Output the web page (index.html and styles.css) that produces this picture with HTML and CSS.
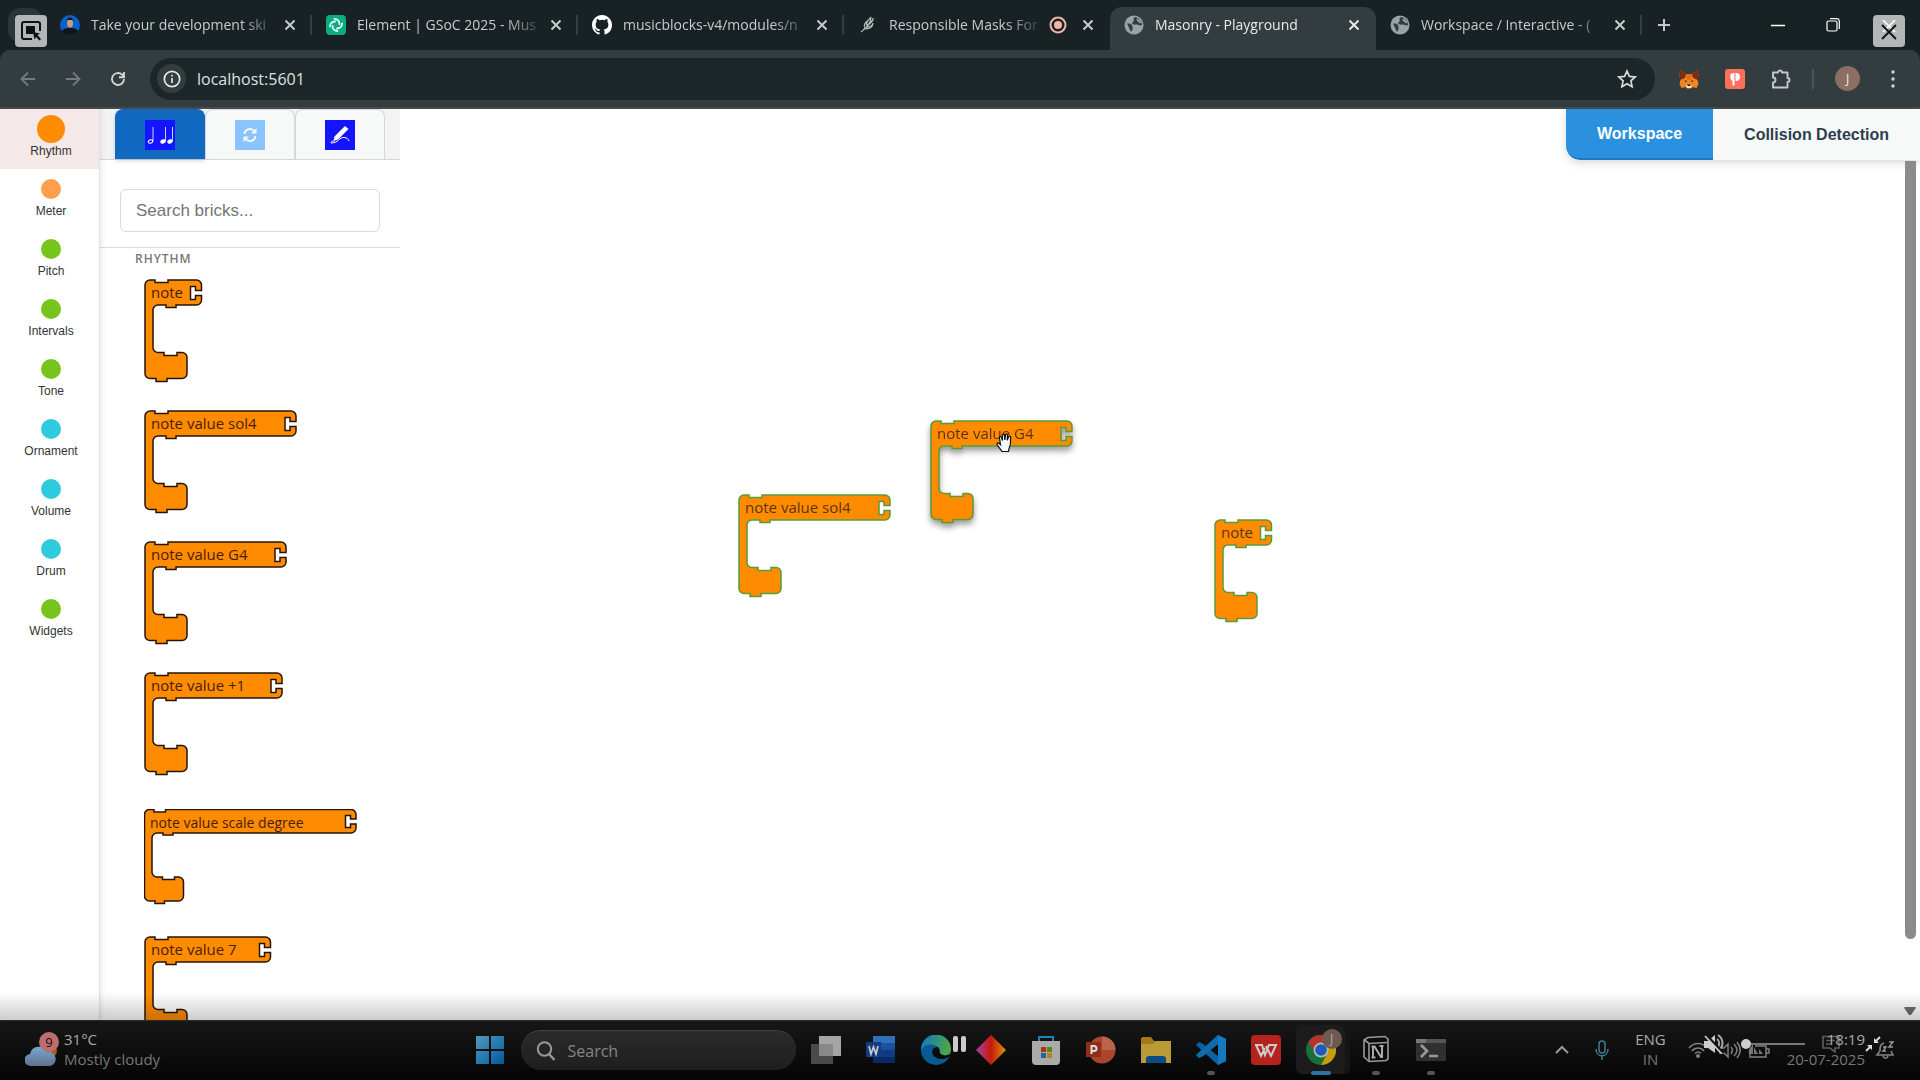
FILE: index.html
```html
<!DOCTYPE html>
<html lang="en">
<head>
<meta charset="utf-8">
<title>Masonry - Playground</title>
<link rel="stylesheet" href="styles.css">
</head>
<body>
<svg class="defs" aria-hidden="true">
  <symbol id="x" viewBox="0 0 12 12"><path d="M1.500 1.500l9 9M10.500 1.500l-9 9" stroke="currentColor" stroke-width="2" fill="none"/></symbol>
  <symbol id="globe" viewBox="0 0 20 20"><circle cx="10" cy="10" r="9.500" fill="#9aa3a6"/><path d="M3 8.500c3 0 4 0 5 2s1 4-1 6.500z" fill="#333d40"/><path d="M11 2c-3 2 0 3-2 5s0 3 3 2.500 4 2 6 .5c0-4-3-7-7-8z" fill="#333d40"/><path d="M13 3.500c-1 2 0 2 1 3s1 2 3.500 1.500c-1-2-2.500-4-4.500-4.500z" fill="#9aa3a6"/></symbol>
</svg>
<div class="screen">
  <header class="browser">
    <div class="tabstrip">
      <div class="tab-search"></div>
      <nav class="tabs" aria-label="Browser tabs">
        <div class="tab"><svg class="fav" viewBox="0 0 20 20"><circle cx="10" cy="10" r="10" fill="#0a62c8"/><path d="M2 16c2-3 5-3 8-3s6 0 8 3a10 10 0 0 1-16 0" fill="#101418"/><ellipse cx="10" cy="8" rx="3" ry="4.500" fill="#c99a82"/><path d="M6.500 7c0-6 7-6 7 0l-1-2h-5z" fill="#1b1512"/></svg><a class="tab-title" href="#">Take your development ski</a><button class="tab-x" aria-label="Close"><svg viewBox="0 0 12 12"><use href="#x"/></svg></button></div>
        <div class="tab"><svg class="fav" viewBox="0 0 20 20"><rect width="20" height="20" rx="4" fill="#0dab83"/><g fill="none" stroke="#e8fff8" stroke-width="1.800" stroke-linecap="round"><path d="M8.500 4a5 5 0 0 1 5 5M16 8.500a5 5 0 0 1-5 5M11.500 16a5 5 0 0 1-5-5M4 11.500a5 5 0 0 1 5-5"/></g></svg><a class="tab-title" href="#">Element | GSoC 2025 - Mus</a><button class="tab-x" aria-label="Close"><svg viewBox="0 0 12 12"><use href="#x"/></svg></button></div>
        <div class="tab"><svg class="fav" viewBox="0 0 16 16"><path fill="#fff" d="M8 0C3.580 0 0 3.580 0 8c0 3.540 2.290 6.530 5.470 7.590.4.070.55-.17.55-.38v-1.490C4 14.090 3.480 13.200 3.320 12.750c-.09-.23-.48-.94-.82-1.130-.28-.15-.68-.52-.01-.53.63-.01 1.080.58 1.230.82.72 1.210 1.870.87 2.330.66.070-.52.28-.87.51-1.070-1.780-.2-3.640-.89-3.640-3.950 0-.87.31-1.590.82-2.150-.08-.2-.36-1.020.08-2.120 0 0 .67-.21 2.200.82a7.600 7.600 0 0 1 4 0c1.530-1.040 2.200-.82 2.200-.82.44 1.100.16 1.920.08 2.120.51.56.82 1.270.82 2.150 0 3.070-1.870 3.750-3.650 3.950.29.25.54.73.54 1.480v2.200c0 .21.15.46.55.38A8 8 0 0 0 16 8c0-4.420-3.580-8-8-8z"/></svg><a class="tab-title" href="#">musicblocks-v4/modules/n</a><button class="tab-x" aria-label="Close"><svg viewBox="0 0 12 12"><use href="#x"/></svg></button></div>
        <div class="tab"><svg class="fav" viewBox="0 0 20 20"><path d="M3 17C8 13 13 9 13 2c-1 2-6 4-4 9m0 0c2-4 7-5 6-8 1 4-3 5-6 8zm-3 3c2-3 8-1 9-6 0 5-4 6-9 6zm1-1c-2-3 0-5 2-7" fill="none" stroke="#b5bbbd" stroke-width="1.200"/></svg><a class="tab-title" href="#">Responsible Masks For</a><svg class="rec" viewBox="0 0 18 18"><circle cx="9" cy="9" r="7.500" fill="none" stroke="#f3b3a6" stroke-width="2"/><circle cx="9" cy="9" r="4" fill="#f3b3a6"/></svg><button class="tab-x" aria-label="Close"><svg viewBox="0 0 12 12"><use href="#x"/></svg></button></div>
        <div class="tab active"><svg class="fav" viewBox="0 0 20 20"><use href="#globe"/></svg><a class="tab-title" href="#">Masonry - Playground</a><button class="tab-x" aria-label="Close"><svg viewBox="0 0 12 12"><use href="#x"/></svg></button></div>
        <div class="tab"><svg class="fav" viewBox="0 0 20 20"><use href="#globe"/></svg><a class="tab-title" href="#">Workspace / Interactive - (</a><button class="tab-x" aria-label="Close"><svg viewBox="0 0 12 12"><use href="#x"/></svg></button></div>
      </nav>
      <button class="new-tab" aria-label="New tab"><svg viewBox="0 0 14 14"><path d="M7 1v12M1 7h12" stroke="currentColor" stroke-width="2"/></svg></button>
      <div class="win-controls">
        <button aria-label="Minimize"><svg viewBox="0 0 14 14"><path d="M0 7.500h14" stroke="#fff" stroke-width="1.500"/></svg></button>
        <button aria-label="Restore"><svg viewBox="0 0 14 14"><path d="M1 4.500a1.500 1.500 0 0 1 1.500-1.500h7A1.500 1.500 0 0 1 11 4.500v7a1.500 1.500 0 0 1-1.500 1.500h-7A1.500 1.500 0 0 1 1 11.500zM4 .7h7A2.500 2.500 0 0 1 13.300 3v8" fill="none" stroke="#fff" stroke-width="1.200"/></svg></button>
      </div>
    </div>
    <div class="toolbar">
      <button class="nav-btn dim" aria-label="Back"><svg viewBox="0 0 16 16"><path d="M15 8H2M8 1.500L1.500 8 8 14.500" fill="none" stroke="currentColor" stroke-width="1.800"/></svg></button>
      <button class="nav-btn dim" aria-label="Forward"><svg viewBox="0 0 16 16"><path d="M1 8h13M8 1.500L14.500 8 8 14.500" fill="none" stroke="currentColor" stroke-width="1.800"/></svg></button>
      <button class="nav-btn" aria-label="Reload"><svg viewBox="0 0 16 16"><path d="M14 8a6 6 0 1 1-2-4.500L14 6M14 1v5.200H9" fill="none" stroke="currentColor" stroke-width="1.900"/></svg></button>
      <div class="omnibox">
        <button class="info" aria-label="Site information"><svg viewBox="0 0 18 18"><circle cx="9" cy="9" r="7.700" fill="none" stroke="#e3e6e7" stroke-width="1.700"/><path d="M9 8v5M9 4.700v1.800" stroke="#e3e6e7" stroke-width="1.700"/></svg></button>
        <input class="url" aria-label="Address" value="localhost:5601">
        <button class="star" aria-label="Bookmark"><svg viewBox="0 0 20 20"><path d="M10 2l2.400 5.400 5.800.6-4.300 3.900 1.200 5.800L10 14.700l-5.100 3 1.200-5.800L1.800 8l5.800-.6z" fill="none" stroke="#d5dadb" stroke-width="1.700"/></svg></button>
      </div>
      <div class="exts">
        <button aria-label="MetaMask"><svg viewBox="0 0 20 20"><path d="M1 1l6 4h6l6-4 .5 6-1 4 1 4-2 4-4-1-1.500 1.500h-4L6.500 18l-4 1-2-4 1-4-1-4z" fill="#f5841f"/><path d="M1 1l6 4-1 4-5 2L.5 7zM19 1l-6 4 1 4 5 2 .5-4z" fill="#7a2d12"/><path d="M7 5h6l-1 6H8z" fill="#e86b1c"/><path d="M5.500 11l2.500 1-1 1.500zM14.500 11l-2.500 1 1 1.500z" fill="#233447"/><path d="M7 16h6l-1 3H8z" fill="#f3e6dc"/><path d="M8.500 15.500h3v1.500h-3z" fill="#161616"/></svg></button>
        <button aria-label="Reader extension"><svg viewBox="0 0 20 20"><rect width="20" height="20" rx="3" fill="#ff6f5b"/><path d="M5.500 5c2-1 3-1 4-1v12.500H7.500V12c-2-1-2.500-3-2-7z M10.500 4c3-.2 4.500 1.200 4.500 4s-1.800 4.300-4.500 4z" fill="#fff"/></svg></button>
        <button aria-label="Extensions"><svg viewBox="0 0 20 20"><path d="M2 3.500h5a2 2 0 0 1 4 0H16.500V9a2 2 0 0 1 0 4V18.500H2v-5a2.300 2.300 0 0 0 0-5z" fill="none" stroke="#c3c9cb" stroke-width="1.900" stroke-linejoin="round"/></svg></button>
      </div>
      <span class="bar-sep"></span>
      <button class="avatar">J</button>
      <button class="kebab" aria-label="Menu"><svg viewBox="0 0 4 20"><circle cx="2" cy="3" r="1.700"/><circle cx="2" cy="10" r="1.700"/><circle cx="2" cy="17" r="1.700"/></svg></button>
    </div>
  </header>

  <main class="app">
    <nav class="categories" aria-label="Brick categories">
      <a class="cat on" href="#"><i class="dot orange"></i>Rhythm</a>
      <a class="cat" href="#"><i class="dot peach"></i>Meter</a>
      <a class="cat" href="#"><i class="dot green"></i>Pitch</a>
      <a class="cat" href="#"><i class="dot green"></i>Intervals</a>
      <a class="cat" href="#"><i class="dot green"></i>Tone</a>
      <a class="cat" href="#"><i class="dot cyan"></i>Ornament</a>
      <a class="cat" href="#"><i class="dot cyan"></i>Volume</a>
      <a class="cat" href="#"><i class="dot cyan"></i>Drum</a>
      <a class="cat" href="#"><i class="dot green"></i>Widgets</a>
    </nav>
    <aside class="palette">
      <div class="palette-tabs">
        <button class="ptab on" aria-label="Music"><svg viewBox="0 0 30 30"><rect width="30" height="30" fill="#1414ff"/><g fill="#fff"><ellipse cx="18" cy="21.500" rx="2.800" ry="2" transform="rotate(-20 18 21.500)"/><ellipse cx="25" cy="21.500" rx="2.800" ry="2" transform="rotate(-20 25 21.500)"/></g><g fill="none" stroke="#fff"><ellipse cx="5.500" cy="21.500" rx="2.300" ry="1.600" transform="rotate(-20 5.500 21.500)"/><path d="M8 21V7M20.500 21V7M27.500 21V7" stroke-width=".8"/></g></svg></button>
        <button class="ptab" aria-label="Flow"><svg viewBox="0 0 30 30"><rect width="30" height="30" fill="#8ac4ff"/><g fill="none" stroke="#f4f9ff" stroke-width="2"><path d="M9.500 14a5.500 5.500 0 0 1 10-2.500M20.500 16a5.500 5.500 0 0 1-10 2.500"/></g><path d="M21.500 8v5.500H16zM8.500 22v-5.500H14z" fill="#f4f9ff"/></svg></button>
        <button class="ptab" aria-label="Graphics"><svg viewBox="0 0 30 30"><rect width="30" height="30" fill="#1414ff"/><path d="M20 6l3.500 3L13 19.500 8.500 21l1-4.500z" fill="#fff"/><path d="M5.500 22.500c2-2 2-1 4-1.500M6 23c8 0 8-6 13-5.500 3 0 4 1.500 5 3.500" fill="none" stroke="#fff"/></svg></button>
      </div>
      <div class="search-row"><input class="brick-search" type="search" aria-label="Search bricks" placeholder="Search bricks..."></div>
      <section class="brick-list">
        <h2>RHYTHM</h2>
        <div class="slot"><svg class="brick" width="60" height="104"><path d="M1 6a5 5 0 0 1 5-5H11V3.500H24V1H52.500a5 5 0 0 1 5 5V11.500h-6V7.500h-5V20.500h5V16.500h6V21a5 5 0 0 1-5 5H32V28.500H22V26H14a5 5 0 0 0-5 5V68.500a5 5 0 0 0 5 5H20V76.500H33V73.500H38a5 5 0 0 1 5 5V94.500a5 5 0 0 1-5 5H23V102.500H12V99.500H6a5 5 0 0 1-5-5Z"/><text x="7" y="19">note</text></svg></div>
        <div class="slot"><svg class="brick" width="154" height="104"><path d="M1 6a5 5 0 0 1 5-5H11V3.500H24V1H147a5 5 0 0 1 5 5V11.500h-6V7.500h-5V20.500h5V16.500h6V21a5 5 0 0 1-5 5H32V28.500H22V26H14a5 5 0 0 0-5 5V68.500a5 5 0 0 0 5 5H20V76.500H33V73.500H38a5 5 0 0 1 5 5V94.500a5 5 0 0 1-5 5H23V102.500H12V99.500H6a5 5 0 0 1-5-5Z"/><text x="7" y="19">note value sol4</text></svg></div>
        <div class="slot"><svg class="brick" width="144" height="104"><path d="M1 6a5 5 0 0 1 5-5H11V3.500H24V1H137a5 5 0 0 1 5 5V11.500h-6V7.500h-5V20.500h5V16.500h6V21a5 5 0 0 1-5 5H32V28.500H22V26H14a5 5 0 0 0-5 5V68.500a5 5 0 0 0 5 5H20V76.500H33V73.500H38a5 5 0 0 1 5 5V94.500a5 5 0 0 1-5 5H23V102.500H12V99.500H6a5 5 0 0 1-5-5Z"/><text x="7" y="19">note value G4</text></svg></div>
        <div class="slot tall"><svg class="brick" width="140" height="104"><path d="M1 6a5 5 0 0 1 5-5H11V3.500H24V1H133a5 5 0 0 1 5 5V11.500h-6V7.500h-5V20.500h5V16.500h6V21a5 5 0 0 1-5 5H32V28.500H22V26H14a5 5 0 0 0-5 5V68.500a5 5 0 0 0 5 5H20V76.500H33V73.500H38a5 5 0 0 1 5 5V94.500a5 5 0 0 1-5 5H23V102.500H12V99.500H6a5 5 0 0 1-5-5Z"/><text x="7" y="19">note value +1</text></svg></div>
        <div class="slot short"><svg class="brick" width="214" height="96"><path d="M.5 5.500a5 5 0 0 1 5-5H10V3H21.500V.5H207a5 5 0 0 1 5 5V10h-5.500V6.500h-5V18.500h5V15h5.500V19a5 5 0 0 1-5 5H29V26H19V24H13a5 5 0 0 0-5 5V63a5 5 0 0 0 5 5H18.500V70.500H30.500V68H34.500a5 5 0 0 1 5 5V87a5 5 0 0 1-5 5H20.500V94.500H11V92H5.500a5 5 0 0 1-5-5Z"/><text class="small" x="6" y="19">note value scale degree</text></svg></div>
        <div class="slot"><svg class="brick" width="129" height="104"><path d="M1 6a5 5 0 0 1 5-5H11V3.500H24V1H121.500a5 5 0 0 1 5 5V11.500h-6V7.500h-5V20.500h5V16.500h6V21a5 5 0 0 1-5 5H32V28.500H22V26H14a5 5 0 0 0-5 5V68.500a5 5 0 0 0 5 5H20V76.500H33V73.500H38a5 5 0 0 1 5 5V94.500a5 5 0 0 1-5 5H23V102.500H12V99.500H6a5 5 0 0 1-5-5Z"/><text x="7" y="19">note value 7</text></svg></div>
      </section>
    </aside>
    <section class="workspace">
      <svg class="brick placed p-sol" width="154" height="104"><path d="M1 6a5 5 0 0 1 5-5H11V3.500H24V1H147a5 5 0 0 1 5 5V11.500h-6V7.500h-5V20.500h5V16.500h6V21a5 5 0 0 1-5 5H32V28.500H22V26H14a5 5 0 0 0-5 5V68.500a5 5 0 0 0 5 5H20V76.500H33V73.500H38a5 5 0 0 1 5 5V94.500a5 5 0 0 1-5 5H23V102.500H12V99.500H6a5 5 0 0 1-5-5Z"/><text x="7" y="19">note value sol4</text></svg>
      <svg class="brick placed dragging p-g4" width="144" height="104"><path d="M1 6a5 5 0 0 1 5-5H11V3.500H24V1H137a5 5 0 0 1 5 5V11.500h-6V7.500h-5V20.500h5V16.500h6V21a5 5 0 0 1-5 5H32V28.500H22V26H14a5 5 0 0 0-5 5V68.500a5 5 0 0 0 5 5H20V76.500H33V73.500H38a5 5 0 0 1 5 5V94.500a5 5 0 0 1-5 5H23V102.500H12V99.500H6a5 5 0 0 1-5-5Z"/><text x="7" y="19">note value G4</text></svg>
      <svg class="brick placed p-note" width="60" height="104"><path d="M1 6a5 5 0 0 1 5-5H11V3.500H24V1H52.500a5 5 0 0 1 5 5V11.500h-6V7.500h-5V20.500h5V16.500h6V21a5 5 0 0 1-5 5H32V28.500H22V26H14a5 5 0 0 0-5 5V68.500a5 5 0 0 0 5 5H20V76.500H33V73.500H38a5 5 0 0 1 5 5V94.500a5 5 0 0 1-5 5H23V102.500H12V99.500H6a5 5 0 0 1-5-5Z"/><text x="7" y="19">note</text></svg>
      <svg class="hand" viewBox="0 0 18 20"><path d="M6 18.500C4 15 1 12.500 1 11s1.500-1.500 3.500.7L3.500 5c-.3-1.800 1.500-2 2-.5l1 3-.3-5c0-1.800 2-1.800 2.200 0l.4 4.500.7-5c.3-1.500 2-1.300 2 .3l-.3 5 1.500-3.500c.6-1.300 2.200-.8 2 .7-.8 5 1 6-1.700 11l-.5 3z" fill="#f3fbff" stroke="#111" stroke-width="1.200"/></svg>
      <div class="page-tabs"><button class="on">Workspace</button><button>Collision Detection</button></div>
      <div class="scrollbar"><i class="thumb"></i><svg viewBox="0 0 14 10"><path d="M2 1h10q1.500 0 .5 1.500L8 9H6L1.500 2.500Q.5 1 2 1z" fill="#6e6e6e"/></svg></div>
    </section>
  </main>

  <footer class="taskbar">
    <div class="weather">
      <svg class="cloud" viewBox="0 0 34 36"><defs><linearGradient id="cg" x2="0" y2="1"><stop stop-color="#7aa6d4"/><stop offset="1" stop-color="#5f7388"/></linearGradient></defs><circle cx="26" cy="19" r="6" fill="#a45d1a"/><path d="M6 34a6 6 0 0 1-1-12 9 9 0 0 1 17-2 7 7 0 0 1 3 14z" fill="url(#cg)"/><circle cx="24" cy="10" r="10" fill="#bd6d6e"/><text x="24" y="15" text-anchor="middle">9</text></svg>
      <div class="lines"><span>31°C</span><span class="faint">Mostly cloudy</span></div>
    </div>
    <div class="dock">
      <button class="ico start" aria-label="Start"><svg viewBox="0 0 30 30"><defs><linearGradient id="win" x2="1" y2="1"><stop stop-color="#4f9cc0"/><stop offset="1" stop-color="#03589c"/></linearGradient></defs><path d="M1 1h13v13H1zM16 1h13v13H16zM1 16h13v13H1zM16 16h13v13H16z" fill="url(#win)"/></svg></button>
      <label class="search"><svg viewBox="0 0 20 20"><circle cx="8.500" cy="8" r="6.700" fill="none" stroke="#989898" stroke-width="2"/><path d="M13 13l5.500 6" stroke="#989898" stroke-width="2.500"/></svg><input aria-label="Search" placeholder="Search"></label>
      <button class="ico" aria-label="Task view"><svg viewBox="0 0 30 30"><path d="M0 9h22v20H0z" fill="#4a4a4a"/><path d="M8 1h22v20H8z" fill="#a5a5a5"/><path d="M8 9h14v12H8z" fill="#888"/></svg></button>
      <button class="ico" aria-label="Word"><svg viewBox="0 0 30 30"><path d="M7 1h22v7H7z" fill="#2d72b6"/><path d="M7 8h22v7H7z" fill="#19539d"/><path d="M7 15h22v7H7z" fill="#103a83"/><path d="M7 22h22v6H7z" fill="#0b2866"/><path d="M0 7h15v15H0z" fill="#123b83"/><path d="M3 11l2 8 2.500-7 2.500 7 2-8" fill="none" stroke="#ccc" stroke-width="1.700"/></svg></button>
      <button class="ico" aria-label="Edge"><svg viewBox="0 0 30 30"><defs><linearGradient id="edge" x2="1" y2=".3"><stop offset=".2" stop-color="#1a7fae"/><stop offset="1" stop-color="#4ea447"/></linearGradient></defs><circle cx="15" cy="15" r="15" fill="#075a94"/><path d="M0 15A15 15 0 0 1 30 14c0 6-6 8-10 6-3-1 1-3-2-7C14 8 4 8 0 15z" fill="url(#edge)"/><path d="M17 12c-5 0-7 4-5 8 3 5 10 5 16 2l2-3c-4 2-9 2-11-1-1-2 0-3-2-6z" fill="#0b0b0b"/></svg></button>
      <button class="ico" aria-label="Copilot"><svg viewBox="0 0 30 30"><defs><linearGradient id="kite"><stop stop-color="#a445a5"/><stop offset=".5" stop-color="#c7190a"/><stop offset="1" stop-color="#d8950d"/></linearGradient></defs><path d="M15 0l15 15-15 15L0 15z" fill="url(#kite)"/></svg></button>
      <button class="ico" aria-label="Store"><svg viewBox="0 0 30 30"><path d="M8 8V2h14v6" fill="none" stroke="#1684bd" stroke-width="2"/><path d="M1 6h28v20a4 4 0 0 1-4 4H5a4 4 0 0 1-4-4z" fill="#aaa"/><path d="M10 12h5v5h-5z" fill="#a93518"/><path d="M16 12h5v5h-5z" fill="#55841a"/><path d="M10 18h5v5h-5z" fill="#146b9c"/><path d="M16 18h5v5h-5z" fill="#b58417"/></svg></button>
      <button class="ico" aria-label="PowerPoint"><svg viewBox="0 0 30 30"><circle cx="16" cy="15" r="13.500" fill="#a9452a"/><path d="M16 1.500A13.500 13.500 0 0 1 29.500 15H16z" fill="#b8654c"/><path d="M0 7h15v15H0z" fill="#8f2d17"/><path d="M5.500 19v-8h2.500a2.300 2.300 0 0 1 0 5H5.500" fill="none" stroke="#ddd" stroke-width="2"/></svg></button>
      <button class="ico" aria-label="File Explorer"><svg viewBox="0 0 30 30"><path d="M0 4q0-2 2-2h8l3 4h17v12H0z" fill="#a47a14"/><path d="M0 9h12l3-3h15v22H0z" fill="#b99a36"/><path d="M5 28v-4q0-3 3-3h14q3 0 3 3v4z" fill="#0b4d83"/></svg></button>
      <button class="ico run" aria-label="VS Code"><svg viewBox="0 0 30 30"><path d="M22 0l8 4v22l-8 4L0 10l3-3 4 2 15 12V9L7 21l-4 2-3-3z" fill="#0c62a0"/><path d="M22 0L0 20l3 3 4-2L22 9z" fill="#0f6cab"/><path d="M22 0l8 4v22l-8 4z" fill="#137bbd"/></svg></button>
      <button class="ico" aria-label="WPS"><svg viewBox="0 0 30 30"><rect width="30" height="30" rx="4" fill="#b5231c"/><path d="M4 10h7l3 10 4-10h7l-5 11-5-10M5 10l5 11 4-8" fill="none" stroke="#ccc" stroke-width="2"/></svg></button>
      <button class="ico focus" aria-label="Chrome"><svg viewBox="0 0 30 30"><circle cx="15" cy="15" r="15" fill="#177039"/><path d="M2 7.500A15 15 0 0 1 28 7.500L15 9l-5 9z" fill="#b5332a"/><path d="M28 7.500A15 15 0 0 1 15 30l6-11V8z" fill="#c79c0f"/><circle cx="15" cy="15" r="7.500" fill="#b9b9b9"/><circle cx="15" cy="15" r="5.800" fill="#1d5cba"/></svg><i class="badge">J</i></button>
      <button class="ico run" aria-label="Notion"><svg viewBox="0 0 30 30"><path d="M3 5l4-2.500L24 1.500 27 4v20l-2 1.500L8 26.500 3 22z" fill="#0b0b0b" stroke="#999" stroke-width="1.600"/><path d="M3.500 5L8 8.500l18-1M8 8v18" fill="none" stroke="#999" stroke-width="1.600"/><path d="M12 22V11.500h1.500L20 22h1V11M10.500 11.500h4M10.500 22.500h4M18.500 11h4" fill="none" stroke="#aaa" stroke-width="2"/></svg></button>
      <button class="ico run" aria-label="Terminal"><svg viewBox="0 0 30 30"><rect y="4" width="30" height="22" rx="1" fill="#303030"/><path d="M0 4h20v4H0z" fill="#777"/><path d="M10 4h20v4H10z" fill="#555"/><path d="M5 10l6 6-6 6M13 21h9" fill="none" stroke="#999" stroke-width="2.700"/></svg></button>
    </div>
    <div class="tray">
      <svg class="t14" viewBox="0 0 14 14"><path d="M1 10l6-6 6 6" fill="none" stroke="#999" stroke-width="2"/></svg>
      <svg class="mic" viewBox="0 0 14 20"><rect x="4" y="1" width="6" height="12" rx="3" fill="none" stroke="#3f7c8e" stroke-width="1.500"/><path d="M1 9c0 9 12 9 12 0M7 16v4" fill="none" stroke="#3f7c8e" stroke-width="1.500"/></svg>
      <div class="lines lang"><span>ENG</span><span class="faint">IN</span></div>
      <svg class="status" viewBox="0 0 84 30"><g fill="none" stroke="#808080" stroke-width="1.500"><path d="M1 13c5-6 13-6 18 0M4 16c3-4 9-4 12 0M7 18.500c2-2 4-2 6 0"/><path d="M32 13h4l4-4v13l-4-4h-4zM43 12c2 2 2 4 0 7M46 9c4 4 4 8 0 12M49 7c4 5 4 11 0 16"/><path d="M62 19v3h16V11H67M78 14h3v4h-3"/></g><path d="M61 19c-1-5 2-7 4-10v10zM66 12l4 7h-4zM71 14l4 5h-4z" fill="#777"/><circle cx="10" cy="21" r="2" fill="#808080"/></svg>
      <div class="lines clock"><span>18:19</span><span class="faint">20-07-2025</span></div>
      <svg class="bell" viewBox="0 0 20 20"><path d="M9 3C5 4 5 7 5 11l-3 4h16l-2-4M8 16c1 3 4 3 5 0" fill="none" stroke="#858585" stroke-width="1.600"/><path d="M8 7h3l-3 4h3M14 2h4l-4 5h4" fill="none" stroke="#999" stroke-width="1.400"/></svg>
    </div>
  </footer>

  <div class="shade"></div>
  <button class="float lens" aria-label="Visual search"><svg viewBox="0 0 22 22"><path d="M20 11V4a2 2 0 0 0-2-2H4a2 2 0 0 0-2 2v13a2 2 0 0 0 2 2h8" fill="none" stroke="#111" stroke-width="2"/><rect x="6" y="6" width="9" height="8" fill="#111"/><path d="M13 12l7 1.500-2.500 1.500L21 19l-1.500 1.500L16 17l-1.500 2.500z" fill="#111"/></svg></button>
  <button class="float shut" aria-label="Close"><svg viewBox="0 0 22 22"><path d="M5 0l12 12M17 0L5 12" stroke="#fff" stroke-width="1.500"/><path d="M4 5l14 14M18 5L4 19" stroke="#111" stroke-width="1.800"/></svg></button>
  <button class="media pause" aria-label="Pause"><svg viewBox="0 0 14 16"><rect width="5" height="16" rx="2" fill="#ccc"/><rect x="8" width="5" height="16" rx="2" fill="#ccc"/></svg></button>
  <button class="media mute" aria-label="Unmute"><svg viewBox="0 0 22 20"><path d="M1 7h4l7-6v18l-7-5H1z" fill="#ccc"/><path d="M14 5c3 2 3 6 0 9M15 1c6 4 6 12 0 16" fill="none" stroke="#aaa" stroke-width="2"/><path d="M3 1l17 18" stroke="#111" stroke-width="3"/><path d="M2 2l17 18" stroke="#ccc" stroke-width="1.800"/></svg></button>
  <input class="media level" type="range" aria-label="Volume" min="0" max="100" value="0">
  <button class="media chat" aria-label="Captions"><svg viewBox="0 0 18 18"><path d="M1 1.500h16V13h-4v4l-5-4H1zM4 5.500h9M4 9h6" fill="none" stroke="#5b5b5b" stroke-width="1.700"/></svg></button>
  <button class="media shrink" aria-label="Exit full screen"><svg viewBox="0 0 16 16"><path d="M15 1l-5 5M1 15l5-5" stroke="#ddd" stroke-width="1.800"/><path d="M9 2v5h5zM7 14V9H2z" fill="#ddd"/></svg></button>
</div>
</body>
</html>
```
FILE: styles.css
```css
* { box-sizing: border-box; }
body { margin: 0; background: #fff; font-family: "Liberation Sans", Arial, sans-serif; }
button, input { font: inherit; color: inherit; border: 0; padding: 0; margin: 0; background: none; outline: 0; }
a { color: inherit; text-decoration: none; }
svg { display: block; flex: none; }
.defs { position: absolute; width: 0; height: 0; }
.screen { position: relative; height: 100vh; display: flex; flex-direction: column; overflow: hidden; }

/* browser chrome */
.browser { flex: none; background: #182224; color: #c6cccd; font-family: "Open Sans", sans-serif; }
.tabstrip { display: flex; align-items: stretch; height: 50px; padding-left: 8px; }
.tab-search { flex: none; width: 34px; height: 34px; margin: 8px 4px 0 0; border-radius: 12px; background: #2b3538; }
.tabs { display: flex; flex: 0 1 1596px; min-width: 0; }
.tab { flex: 1 1 0; min-width: 0; display: flex; align-items: center; height: 36px; margin-top: 7px; padding: 0 16px 0 14px; position: relative; }
.tab::after { content: ""; position: absolute; right: 0; top: 8px; width: 2px; height: 20px; background: #333d40; }
.tab:nth-child(4)::after, .tab.active::after { display: none; }
.tab.active { height: 43px; padding-bottom: 7px; background: #333d40; border-radius: 12px 12px 0 0; color: #e8eaeb; }
.fav { width: 20px; height: 20px; margin-right: 11px; }
.tab-title { flex: 1; min-width: 0; font-size: 14px; line-height: 20px; white-space: nowrap; overflow: hidden; margin-right: 4px; -webkit-mask-image: linear-gradient(90deg, #000 calc(100% - 40px), transparent); mask-image: linear-gradient(90deg, #000 calc(100% - 40px), transparent); }
.rec { width: 18px; height: 18px; margin-right: 15px; }
.tab-x svg { width: 12px; height: 12px; }
.new-tab { margin: 0 0 0 15px; }
.new-tab svg { width: 14px; height: 14px; }
.win-controls { display: flex; gap: 41px; align-items: center; margin-left: auto; padding-right: 80px; }
.win-controls svg { width: 14px; height: 14px; }
.toolbar { display: flex; align-items: center; height: 59px; padding: 0 25px 0 20px; background: #333d40; border-bottom: 2px solid #4a4a4d; border-radius: 10px 10px 0 0; }
.nav-btn { margin-right: 29px; color: #d0d5d6; }
.nav-btn:nth-child(3) { margin-right: 24px; }
.nav-btn.dim { color: #747c7f; }
.nav-btn svg { width: 16px; height: 16px; }
.omnibox { flex: 1; display: flex; align-items: center; height: 42px; margin-right: 24px; padding: 0 18px 0 7px; border-radius: 21px; background: #1c2629; }
.info { display: grid; place-items: center; width: 29px; height: 29px; border-radius: 50%; background: #333d40; margin-right: 11px; }
.info svg { width: 18px; height: 18px; }
.url { flex: 1; min-width: 0; font-size: 16px; line-height: 22px; color: #dde0e1; }
.star svg, .exts svg { width: 20px; height: 20px; }
.exts { display: flex; gap: 26px; }
.bar-sep { width: 2px; height: 20px; margin: 0 21px; background: #4a5558; }
.avatar { width: 25px; height: 25px; border-radius: 50%; background: #8d6e63; color: #eee; font-size: 12px; }
.kebab { margin-left: 31px; }
.kebab svg { width: 4px; height: 20px; fill: #d0d5d6; }

/* application */
.app { flex: 1; min-height: 0; display: flex; }
.categories { flex: none; width: 100px; background: #fff; border-right: 1px solid #e2e2e2; box-shadow: 2px 0 5px rgba(0,0,0,.08); z-index: 1; }
.cat { display: flex; flex-direction: column; align-items: center; gap: 5px; height: 60px; padding: 10px 0 0 3px; font-size: 12px; line-height: 15px; color: #333; }
.cat.on { background: #f5e8e8; }
.dot { width: 20px; height: 20px; border-radius: 50%; }
.cat.on .dot { transform: scale(1.4); }
.orange { background: #ff8c00; }
.peach { background: #ff9e4f; }
.green { background: #76c41c; }
.cyan { background: #2ecbdf; }
.palette { flex: none; width: 300px; display: flex; flex-direction: column; }
.palette-tabs { display: flex; height: 51px; padding-left: 15px; background: #f3f3f3; border-bottom: 1px solid #d5d8da; }
.ptab { display: grid; place-items: center; width: 90px; border: 1px solid #d5d8da; border-bottom: 0; border-radius: 8px 8px 0 0; background: #f7f9f9; }
.ptab.on { background: #1068c0; border-color: #1068c0; box-shadow: 0 2px 4px rgba(0,0,0,.15); }
.ptab svg { width: 30px; height: 30px; }
.search-row { padding: 29px 20px 15px; border-bottom: 1px solid #dcdcdc; }
.brick-search { display: block; width: 100%; height: 43px; padding: 0 15px; border: 1px solid #d9d9d9; border-radius: 6px; font-size: 17px; color: #333; appearance: none; }
.brick-search::placeholder { color: #757575; }
.brick-list { flex: 1; min-height: 0; overflow: hidden; padding-left: 35px; }
.brick-list h2 { margin: 0 0 11px; padding-top: 2px; font: 600 12px/18px "Open Sans", sans-serif; letter-spacing: 1px; color: #757575; }
.slot { height: 131px; padding-left: 9px; }
.slot.tall { height: 137px; }
.slot.short { height: 127px; }
.brick path { fill: #ff8c00; stroke: #26140a; stroke-width: 1.500px; }
.brick text { font-family: "Open Sans", sans-serif; font-size: 15px; fill: #4a1c00; }
.brick .small { font-size: 14px; }
.workspace { position: relative; flex: 1; min-width: 0; }
.placed { position: absolute; }
.placed path { stroke: #5b9a35; }
.placed text { fill: #5c3310; }
.p-sol { left: 338px; top: 385px; }
.p-g4 { left: 530px; top: 311px; }
.p-note { left: 814px; top: 410px; }
.dragging { filter: drop-shadow(0 4px 3px rgba(0,0,0,.4)); }
.hand { position: absolute; left: 596px; top: 324px; width: 18px; height: 20px; }
.page-tabs { position: absolute; right: 0; top: 0; display: flex; height: 51px; border-bottom-left-radius: 14px; overflow: hidden; background: #f7f8f8; box-shadow: 0 3px 8px rgba(0,0,0,.15); }
.page-tabs button { padding: 0 31px; font-size: 16px; font-weight: 700; color: #2c3e50; }
.page-tabs .on { background: #2b90dd; color: #fff; border-bottom: 2px solid #2079bf; border-bottom-left-radius: 14px; }
.scrollbar { position: absolute; right: 3px; top: 52px; bottom: 0; width: 14px; display: flex; flex-direction: column; justify-content: space-between; align-items: center; padding-bottom: 4px; }
.thumb { width: 11px; height: 91%; border-radius: 0 0 6px 6px; background: #8b8b8b; }
.scrollbar svg { width: 14px; height: 10px; }

/* taskbar */
.taskbar { flex: none; display: flex; align-items: center; height: 60px; padding-bottom: 1px; background: linear-gradient(#171717, #050505); border-top: 1px solid #2b2b2b; font-family: "Open Sans", sans-serif; color: #aaa; }
.weather { display: flex; flex: 1 1 0; align-items: center; padding-left: 25px; gap: 5px; }
.cloud { width: 34px; height: 36px; }
.cloud text { font-size: 13px; fill: #111; }
.lines { display: flex; flex-direction: column; font-size: 15px; line-height: 20px; padding-bottom: 2px; white-space: nowrap; }
.faint { color: #777; }
.dock { flex: none; display: flex; align-items: center; gap: 25px; }
.ico { position: relative; flex: none; width: 30px; height: 30px; }
.ico svg { position: relative; width: 30px; height: 30px; }
.start { margin-right: -9px; }
.search { display: flex; align-items: center; width: 275px; height: 40px; margin-right: -10px; padding-left: 15px; gap: 12px; border-radius: 20px; background: linear-gradient(#2b2b2b, #1e1e1e); border-top: 1px solid #444; }
.search svg { width: 20px; height: 20px; }
.search input { width: 200px; font-size: 16px; color: #aaa; }
.search input::placeholder { color: #858585; }
.run::after, .focus::after { content: ""; position: absolute; left: 11px; bottom: -10px; width: 8px; height: 4px; border-radius: 2px; background: #555; }
.focus::after { left: 5px; width: 20px; background: #2d74a3; }
.focus::before { content: ""; position: absolute; inset: -10px -9px -9px -10px; border-radius: 6px; background: #1c1c1c; box-shadow: 5px 0 0 #151515; }
.badge { position: absolute; left: 16px; top: -6px; width: 20px; height: 20px; border-radius: 50%; background: #6f5a52; color: #aaa; font: 12px/20px "Open Sans", sans-serif; text-align: center; }
.tray { flex: 1 1 0; display: flex; align-items: center; justify-content: flex-end; padding-right: 25px; }
.t14 { width: 14px; height: 14px; margin-right: 26px; }
.mic { width: 14px; height: 20px; margin-right: 26px; }
.lang { align-items: center; margin-right: 22px; }
.status { width: 84px; height: 30px; }
.clock { position: relative; z-index: 5; align-items: flex-end; margin: 0 10px 0 15px; }
.bell { width: 20px; height: 20px; }

/* overlay controls */
.shade { position: absolute; left: 0; right: 0; bottom: 60px; height: 28px; background: linear-gradient(transparent, rgba(0,0,0,.2)); z-index: 2; pointer-events: none; }
.float { position: absolute; top: 15px; width: 32px; height: 32px; display: grid; place-items: center; border-radius: 4px; background: #b3b5b6; }
.float svg { width: 22px; height: 22px; }
.lens { left: 15px; }
.shut { right: 15px; }
.media { position: absolute; z-index: 4; }
.media svg { width: 100%; height: 100%; }
.pause { left: 953px; bottom: 28px; width: 14px; height: 16px; }
.mute { right: 195px; bottom: 26px; width: 22px; height: 20px; }
.level { right: 115px; bottom: 31px; width: 64px; height: 10px; appearance: none; background: linear-gradient(#777, #777) center / 100% 2px no-repeat; }
.level::-webkit-slider-thumb { appearance: none; width: 10px; height: 10px; border-radius: 50%; background: #ccc; }
.chat { right: 80px; bottom: 27px; width: 18px; height: 18px; }
.shrink { right: 39px; bottom: 28px; width: 16px; height: 16px; }
```
